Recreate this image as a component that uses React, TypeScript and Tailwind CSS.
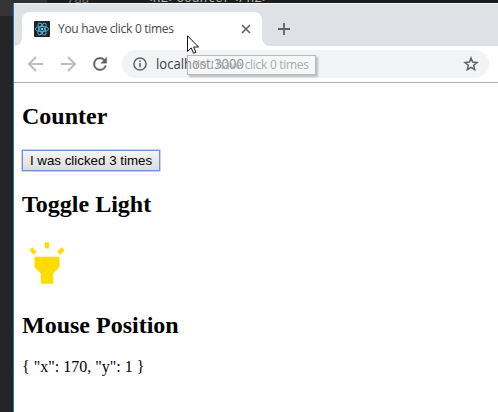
import React from "react";

const uiFont = "font-['Open_Sans','Noto_Sans',sans-serif]";

function ReactLogo() {
  return (
    <svg className="h-4 w-4 shrink-0" viewBox="0 0 16 16">
      <rect width="16" height="16" rx="1" fill="#20232a" />
      <g fill="none" stroke="#53b9d6" strokeWidth="0.9">
        <ellipse cx="8" cy="8" rx="6.6" ry="2.6" />
        <ellipse cx="8" cy="8" rx="6.6" ry="2.6" transform="rotate(60 8 8)" />
        <ellipse cx="8" cy="8" rx="6.6" ry="2.6" transform="rotate(120 8 8)" />
      </g>
      <circle cx="8" cy="8" r="1.3" fill="#61dafb" />
    </svg>
  );
}

function TabStrip() {
  return (
    <div className="flex h-[43px] items-end border-t border-[#f3f5f7] bg-[#dee1e6]">
      <svg className="h-2 w-2 shrink-0" viewBox="0 0 8 8">
        <path d="M8 0v8H0A8 8 0 0 0 8 0Z" fill="#fff" />
      </svg>
      <div className="flex h-[34px] w-[240px] items-center rounded-t-lg bg-white pl-3 pr-[11px]">
        <ReactLogo />
        <svg className="ml-2 h-5 w-[120px] overflow-visible" viewBox="0 0 120 20">
          <text x="0" y="14" textLength="116" fill="#45494d" fontSize="12" className={uiFont}>
            You have click 0 times
          </text>
        </svg>
        <svg className="ml-auto h-2.5 w-2.5" viewBox="0 0 10 10" stroke="#5f6368" strokeWidth="1.6">
          <path d="M1 1l8 8M9 1L1 9" />
        </svg>
      </div>
      <svg className="h-2 w-2 shrink-0" viewBox="0 0 8 8">
        <path d="M0 0v8h8A8 8 0 0 1 0 0Z" fill="#fff" />
      </svg>
      <svg className="mb-[11px] ml-2 h-3 w-3" viewBox="0 0 12 12" stroke="#5f6368" strokeWidth="1.8">
        <path d="M6 0v12M0 6h12" />
      </svg>
    </div>
  );
}

function Toolbar() {
  return (
    <div className="flex h-[37px] items-center border-b border-[#b0b1b3] bg-white pl-[10px] pr-[9px]">
      <svg className="h-6 w-6" viewBox="0 0 24 24" fill="none" stroke="#babcbe" strokeWidth="2">
        <path d="M19 12H6M12 5l-7 7 7 7" />
      </svg>
      <svg className="ml-2 h-6 w-6" viewBox="0 0 24 24" fill="none" stroke="#babcbe" strokeWidth="2">
        <path d="M5 12h13M12 5l7 7-7 7" />
      </svg>
      <svg className="ml-[10px] h-5 w-5" viewBox="0 0 24 24" fill="#5f6368" stroke="#5f6368" strokeWidth="0.5">
        <path d="M17.65 6.35A7.96 7.96 0 0 0 12 4a8 8 0 1 0 7.73 10h-2.08A6 6 0 1 1 12 6c1.66 0 3.14.69 4.22 1.78L13 11h7V4z" />
      </svg>
      <div className="ml-3 flex h-7 flex-1 items-center rounded-full bg-[#f1f3f4] pl-[11px] pr-[10px]">
        <svg className="h-[14px] w-[14px]" viewBox="0 0 14 14" fill="none" stroke="#5f6368">
          <circle cx="7" cy="7" r="6.1" strokeWidth="1.5" />
          <path d="M7 6v4.3M7 3.5V5" strokeWidth="1.6" />
        </svg>
        <svg className="ml-[9px] h-6 w-[90px] overflow-visible" viewBox="0 0 90 24">
          <text x="0" y="17" textLength="88" lengthAdjust="spacingAndGlyphs" fontSize="14" className={uiFont} fill="#3c4043">
            localhost:3000
          </text>
        </svg>
        <svg className="ml-auto h-4 w-4" viewBox="0 0 16 16" fill="none" stroke="#5f6368" strokeWidth="1.5">
          <path d="M8 2.1l1.6 4 4.4.4-3.3 2.8 1 4.3L8 11.3l-3.7 2.3 1-4.3L2 6.5l4.4-.4Z" />
        </svg>
      </div>
    </div>
  );
}

function Heading({ children }: { children: React.ReactNode }) {
  return <h2 className="text-2xl font-bold leading-7">{children}</h2>;
}

function Page() {
  return (
    <main className="px-2 pt-[19px] font-['Liberation_Serif',serif] text-black">
      <Heading>Counter</Heading>
      <button className="mt-5 flex h-[21px] w-[138px] items-center justify-center border border-[#6b94d6] bg-linear-to-b from-[#f4f4f4] to-[#dddddd] font-['Liberation_Sans',sans-serif] text-[13.333px] leading-none whitespace-nowrap shadow-[0_0_0_0.5px_#8aaae0]">
        I was clicked 3 times
      </button>
      <div className="mt-[19px]">
        <Heading>Toggle Light</Heading>
      </div>
      <svg className="mt-5 h-[50px] w-[50px]" viewBox="0 0 24 24" fill="#ffdc00">
        <path d="M6 14l3 3v5h6v-5l3-3V9H6zm5-12h2v3h-2zM3.5 5.875L4.914 4.46l2.12 2.122L5.62 7.997zm13.46.71l2.123-2.12 1.414 1.414L18.375 8z" />
      </svg>
      <div className="mt-[23px]">
        <Heading>Mouse Position</Heading>
      </div>
      <p className="mt-[18px] text-base leading-5">{'{ "x": 170, "y": 1 }'}</p>
    </main>
  );
}

export default function App() {
  return (
    <div className="relative flex h-[412px] w-[498px] overflow-hidden bg-[#1e1e1e]">
      <div className="w-[13px] shrink-0 bg-[#252526]">
        <div className="h-4 bg-[#353536]" />
      </div>
      <div className="flex min-w-0 flex-1 flex-col">
        <div className="relative h-[3px] overflow-hidden bg-[#1e1c1c]">
          <div className="h-full w-[34px] bg-[#303031]" />
          <span className="absolute left-[54px] top-[-10px] font-['Noto_Sans',sans-serif] text-[13px] leading-4 text-[#777]">7aa</span>
          <span className="absolute left-[132px] top-[-9px] font-['Liberation_Mono',monospace] text-[13px] leading-4 text-[#b5b5b5]">
            &lt;h2&gt;Counter&lt;/h2&gt;
          </span>
        </div>
        <div className="flex-1 border-l border-[#2676b5] bg-white">
          <TabStrip />
          <Toolbar />
          <Page />
        </div>
      </div>
      <div className="absolute left-[187px] top-[55px] h-5 w-[129px] border border-[#b9babb] bg-white/40 shadow-[2px_2px_2px_rgba(0,0,0,0.22)]">
        <svg className="h-[18px] w-[127px]" viewBox="0 0 127 18">
          <text x="5" y="13" textLength="116" fontSize="12" className={uiFont} fill="#a9abad">
            You have click 0 times
          </text>
        </svg>
      </div>
      <svg className="absolute left-[187px] top-[35px] h-[19px] w-3" viewBox="0 0 12 19">
        <path d="M.5.8v15.7l3.7-3.6 2.4 5.4 2.3-1-2.3-5.3h5Z" fill="#fff" stroke="#16161e" />
      </svg>
    </div>
  );
}
